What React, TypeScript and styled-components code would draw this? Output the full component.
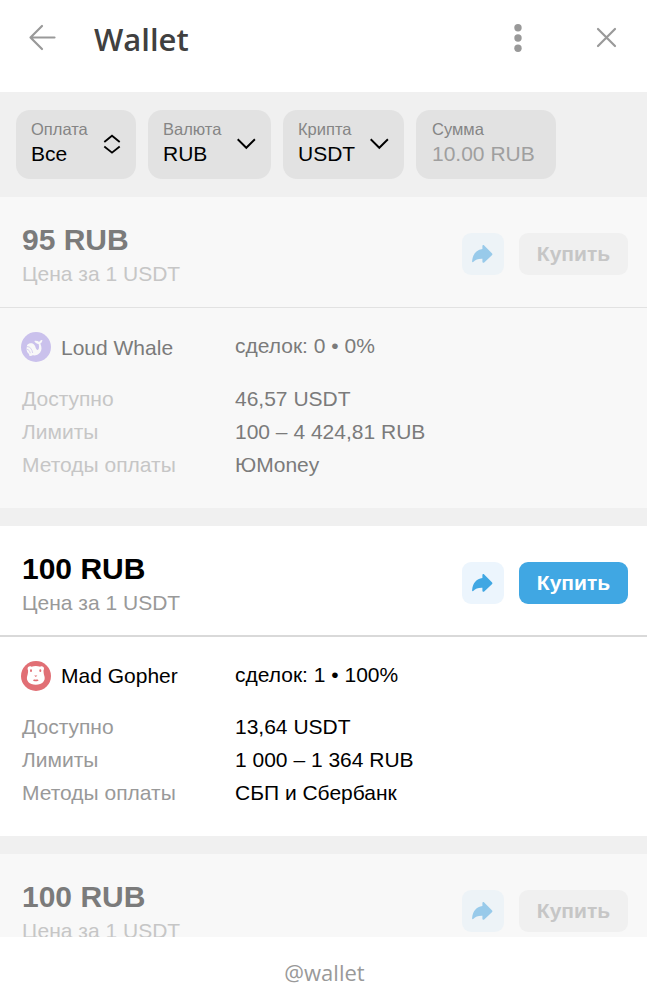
import React from "react";
import styled, { createGlobalStyle } from "styled-components";

const GlobalStyle = createGlobalStyle`
  * { box-sizing: border-box; }
  body {
    margin: 0;
    background: #fff;
    font-family: "Liberation Sans", Arial, sans-serif;
    font-size: 21px;
  }
`;

const Page = styled.div`
  display: flex;
  flex-direction: column;
  width: 647px;
  height: 993px;
  background: #fff;
  overflow: hidden;
`;

const Header = styled.header`
  display: flex;
  align-items: flex-start;
  flex: 0 0 92px;
  padding: 22px 30px 0 28px;
`;

const Title = styled.h1`
  flex: 1;
  margin: -5px 0 0 38px;
  font: 600 31px/44px "Open Sans", sans-serif;
  color: #404040;
`;

const IconButton = styled.button<{ $gap?: number }>`
  display: flex;
  margin: 0 0 0 ${(p) => p.$gap ?? 0}px;
  padding: 0;
  border: 0;
  background: none;
  color: #999;
`;

const Filters = styled.div`
  display: flex;
  flex: 0 0 105px;
  gap: 12px;
  padding: 18px 16px;
  background: #f0f0f0;
`;

const Filter = styled.div<{ $width: number; $muted?: boolean }>`
  display: flex;
  align-items: flex-start;
  justify-content: space-between;
  width: ${(p) => p.$width}px;
  height: 69px;
  padding: 8px 14px 0 ${(p) => (p.$muted ? 16 : 15)}px;
  border-radius: 14px;
  background: #e2e2e2;
`;

const FilterText = styled.div`
  display: flex;
  flex-direction: column;
  white-space: nowrap;
`;

const FilterLabel = styled.span`
  font-size: 16.5px;
  line-height: 22px;
  color: #858585;
`;

const FilterValue = styled.span<{ $muted?: boolean }>`
  font-size: 21px;
  line-height: 27px;
  color: ${(p) => (p.$muted ? "#9f9f9f" : "#000")};
`;

const Chevron = styled.svg`
  display: block;
  margin-top: 15px;
`;

const List = styled.main`
  display: flex;
  flex-direction: column;
  flex: 0 0 740px;
  gap: 18px;
  background: #f0f0f0;
  overflow: hidden;
`;

const Card = styled.article<{ $active?: boolean }>`
  flex: 0 0 ${(p) => (p.$active ? 310 : 311)}px;
  background: ${(p) => (p.$active ? "#fff" : "#f8f8f8")};
  color: ${(p) => (p.$active ? "#000" : "#7b7b7b")};
`;

const CardHead = styled.div<{ $active?: boolean }>`
  display: flex;
  justify-content: space-between;
  height: 111px;
  padding: 26px 19px 0 22px;
  border-bottom: ${(p) => (p.$active ? "2px solid #d9d9d9" : "1px solid #e2e2e2")};
`;

const Price = styled.div`
  font-size: 30px;
  font-weight: 700;
  line-height: 34px;
  white-space: nowrap;
`;

const Caption = styled.div<{ $active?: boolean }>`
  line-height: 33px;
  color: ${(p) => (p.$active ? "#999" : "#c6c6c6")};
  white-space: nowrap;
`;

const Actions = styled.div`
  display: flex;
  gap: 15px;
  padding-top: 10px;
`;

const ShareButton = styled.button<{ $active?: boolean }>`
  width: 42px;
  height: 42px;
  padding: 0;
  border: 0;
  border-radius: 9px;
  background: ${(p) => (p.$active ? "#ecf5fd" : "#edf3f7")};
  color: ${(p) => (p.$active ? "#40a7e3" : "#98caea")};
`;

const BuyButton = styled.button<{ $active?: boolean }>`
  width: 109px;
  height: 42px;
  padding: 0;
  border: 0;
  border-radius: 9px;
  background: ${(p) => (p.$active ? "#40a7e3" : "#f0f0f0")};
  color: ${(p) => (p.$active ? "#fff" : "#c6c6c6")};
  font: 700 21px/42px "Liberation Sans", Arial, sans-serif;
`;

const Seller = styled.div<{ $active?: boolean }>`
  display: grid;
  grid-template-columns: 213px 1fr;
  align-items: center;
  height: 30px;
  margin: ${(p) => (p.$active ? 24 : 23)}px 0 21px;
  padding-left: 22px;
  white-space: nowrap;
`;

const Person = styled.div`
  display: flex;
  align-items: center;
  gap: 10px;
  margin-left: -1px;
`;

const Name = styled.span<{ $active?: boolean }>`
  line-height: 30px;
  padding-top: ${(p) => (p.$active ? 0 : 2)}px;
`;

const Deals = styled.span`
  line-height: 28px;
  padding-bottom: 2px;
`;

const Details = styled.dl<{ $active?: boolean }>`
  display: grid;
  grid-template-columns: 213px 1fr;
  grid-auto-rows: 33px;
  margin: ${(p) => (p.$active ? -2 : 0)}px 0 0;
  padding-left: 22px;
  line-height: 33px;
  white-space: nowrap;
`;

const Term = styled.dt<{ $active?: boolean }>`
  color: ${(p) => (p.$active ? "#999" : "#c6c6c6")};
`;

const Value = styled.dd`
  margin: 0;
`;

const Footer = styled.footer`
  flex: 1;
  padding: 19px 0 0 2px;
  font: 400 22px/32px "Open Sans", sans-serif;
  color: #999;
  text-align: center;
`;

const UpDown = () => (
  <Chevron width="20" height="24" viewBox="0 0 20 24" fill="none" stroke="#000" strokeWidth="1.8">
    <path d="M2.300 9 10 2.700 17.700 9M2.300 13.500 10 19.600 17.700 13.500" />
  </Chevron>
);

const Down = () => (
  <Chevron width="20" height="24" viewBox="0 0 20 24" fill="none" stroke="#000" strokeWidth="1.9">
    <path d="M.7 6.300 9.300 14.800 17.900 6.300" />
  </Chevron>
);

const ShareIcon = () => (
  <svg width="42" height="42" viewBox="0 0 42 42" fill="currentColor" display="block">
    <path d="M20.400 13c0-1.200 1-1.300 1.800-.6l7.700 7.800c.7.7.7 1.300 0 2l-7.700 7.200c-.9.8-1.800.5-1.800-.6v-3c-4.400-.1-7 .8-8.900 3-.7.800-1.500.500-1.400-.5.700-7.600 4.300-11.400 10.300-12.300Z" />
  </svg>
);

const Whale = () => (
  <svg width="30" height="30" viewBox="0 0 30 30">
    <circle cx="15" cy="15" r="15" fill="#cac1ec" />
    <path
      d="M6 13.200c2-2.300 5.200-2.400 7.200-.5 1.500 1.500 1.400 4.600 3 5.200 1.600.4 2.300-2.400 1.400-5.900-2-.3-3.500-1.300-4.300-3.100 2-.3 3.700 0 4.900 1 .7-1.200 1.900-1.800 3.200-1.800-.2 1.700-.9 2.800-2.100 3.500 1.500 3.300 1.800 6.500-.2 9-1.900 2.300-4.600 3.200-7.500 2.700-1.200.8-2.700.8-3.700 0l.4-1.200c-1.900-.9-2.600-2.800-2.700-5.100Z"
      fill="#f8f8f8"
    />
    <path d="M6 14.500c3.300.2 4.900 2.500 5.700 6.500M6 17.400c1.800.2 2.700 1.500 3.300 3.800" fill="none" stroke="#cac1ec" strokeWidth=".7" />
  </svg>
);

const Gopher = () => (
  <svg width="30" height="30" viewBox="0 0 30 30">
    <circle cx="15" cy="15" r="15" fill="#e16f75" />
    <path
      d="M7.200 6.100c.8-1 2.300-1 3.200-.4 2.900-.9 5.900-.9 8.800 0 .9-.6 2.400-.6 3.200.4.900 1.100.7 2.400.1 3.300 0 2.300.4 4 .9 5.700 1.400 4.800-2.100 8.700-8.600 8.700S4.800 19.900 6.200 15.100c.5-1.700.9-3.400.9-5.700-.6-.9-.8-2.200.1-3.300Z"
      fill="#fff"
    />
    <g fill="#e16f75">
      <ellipse cx="10" cy="9.700" rx="1" ry="1.400" />
      <ellipse cx="19.300" cy="9.700" rx="1" ry="1.400" />
      <path d="M13.200 14.500h3.200L14.800 16ZM12.100 19.600c0-1.100 1.600-1.600 2.700-.8 1.100-.8 2.700-.3 2.700.8 0 .9-5.400.9-5.400 0Z" />
    </g>
  </svg>
);

interface Offer {
  price: string;
  active?: boolean;
  seller: string;
  avatar: React.ReactNode;
  deals: string;
  details: [string, string][];
}

const offers: Offer[] = [
  {
    price: "95 RUB",
    seller: "Loud Whale",
    avatar: <Whale />,
    deals: "сделок: 0 • 0%",
    details: [
      ["Доступно", "46,57 USDT"],
      ["Лимиты", "100 – 4 424,81 RUB"],
      ["Методы оплаты", "ЮMoney"],
    ],
  },
  {
    price: "100 RUB",
    active: true,
    seller: "Mad Gopher",
    avatar: <Gopher />,
    deals: "сделок: 1 • 100%",
    details: [
      ["Доступно", "13,64 USDT"],
      ["Лимиты", "1 000 – 1 364 RUB"],
      ["Методы оплаты", "СБП и Сбербанк"],
    ],
  },
];

const OfferHead = ({ price, active }: { price: string; active?: boolean }) => (
  <CardHead $active={active}>
    <div>
      <Price>{price}</Price>
      <Caption $active={active}>Цена за 1 USDT</Caption>
    </div>
    <Actions>
      <ShareButton $active={active} aria-label="Поделиться">
        <ShareIcon />
      </ShareButton>
      <BuyButton $active={active}>Купить</BuyButton>
    </Actions>
  </CardHead>
);

const filters = [
  { label: "Оплата", value: "Все", width: 120, icon: <UpDown /> },
  { label: "Валюта", value: "RUB", width: 123, icon: <Down /> },
  { label: "Крипта", value: "USDT", width: 121, icon: <Down /> },
  { label: "Сумма", value: "10.00 RUB", width: 140, muted: true },
];

export default function App() {
  return (
    <Page>
      <GlobalStyle />
      <Header>
        <IconButton aria-label="Назад">
          <svg width="28" height="30" viewBox="0 0 28 30" fill="none" stroke="currentColor" strokeWidth="2.2" strokeLinecap="round" strokeLinejoin="round">
            <path d="M26.500 15.500H2.500M14 4 2.500 15.500 14 27" />
          </svg>
        </IconButton>
        <Title>Wallet</Title>
        <IconButton aria-label="Меню">
          <svg width="10" height="30" viewBox="0 0 10 30" fill="currentColor">
            <circle cx="5" cy="5.700" r="3.700" />
            <circle cx="5" cy="16" r="3.700" />
            <circle cx="5" cy="26.300" r="3.700" />
          </svg>
        </IconButton>
        <IconButton $gap={73} aria-label="Закрыть">
          <svg width="21" height="30" viewBox="0 0 21 30" fill="none" stroke="currentColor" strokeWidth="2.200" strokeLinecap="round">
            <path d="M2 7 19 24M19 7 2 24" />
          </svg>
        </IconButton>
      </Header>
      <Filters>
        {filters.map((f) => (
          <Filter key={f.label} $width={f.width} $muted={f.muted}>
            <FilterText>
              <FilterLabel>{f.label}</FilterLabel>
              <FilterValue $muted={f.muted}>{f.value}</FilterValue>
            </FilterText>
            {f.icon}
          </Filter>
        ))}
      </Filters>
      <List>
        {offers.map((o) => (
          <Card key={o.seller} $active={o.active}>
            <OfferHead price={o.price} active={o.active} />
            <Seller $active={o.active}>
              <Person>
                {o.avatar}
                <Name $active={o.active}>{o.seller}</Name>
              </Person>
              <Deals>{o.deals}</Deals>
            </Seller>
            <Details $active={o.active}>
              {o.details.map(([term, value]) => (
                <React.Fragment key={term}>
                  <Term $active={o.active}>{term}</Term>
                  <Value>{value}</Value>
                </React.Fragment>
              ))}
            </Details>
          </Card>
        ))}
        <Card>
          <OfferHead price="100 RUB" />
        </Card>
      </List>
      <Footer>@wallet</Footer>
    </Page>
  );
}
